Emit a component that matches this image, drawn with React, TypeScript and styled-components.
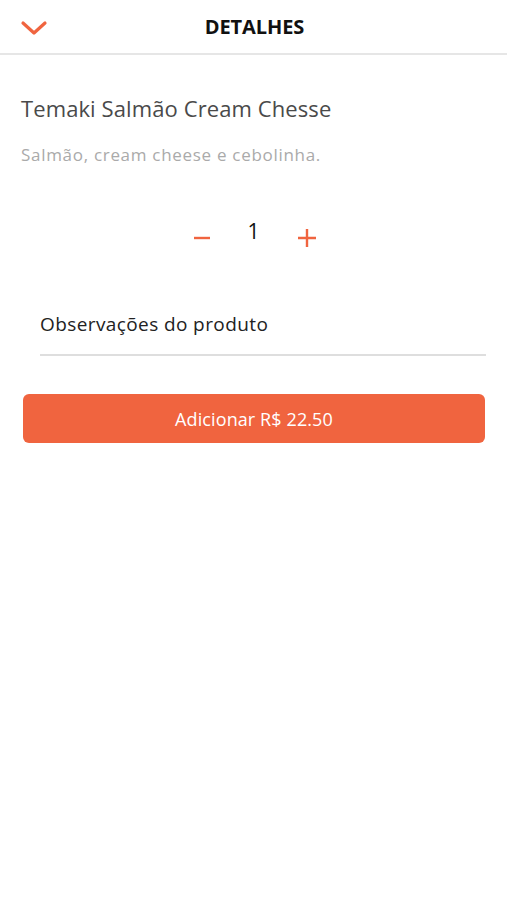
import React, {useState} from "react";
import styled, {createGlobalStyle} from "styled-components";

const ORANGE = '#f0643f';

const GlobalStyle = createGlobalStyle`
  body {
    margin: 0;
    background: #fff;
    font-family: "Open Sans", "Noto Sans", sans-serif;
  }
`;

const Page = styled.div`
  width: 507px;
  min-height: 900px;
  background: #fff;
`;

const Header = styled.header`
  position: relative;
  height: 53px;
  display: flex;
  align-items: center;
  justify-content: center;
  border-bottom: 2px solid #e6e6e6;
`;

const BackButton = styled.button`
  position: absolute;
  left: 20px;
  top: 18px;
  padding: 0;
  border: 0;
  background: none;
  display: flex;
`;

const Title = styled.h1`
  margin: 0 0 0 2px;
  font-size: 20px;
  font-weight: 700;
  color: #111;
  letter-spacing: -0.1px;
`;

const Content = styled.main`
  padding: 38px 21px 0 23px;
  display: flex;
  flex-direction: column;
`;

const ProductName = styled.h2`
  margin: 0 0 0 -2px;
  font-size: 22px;
  font-weight: 400;
  color: #4a4a4a;
  line-height: 30px;
  letter-spacing: 0.1px;
`;

const Description = styled.p`
  margin: 21px 0 0 -2px;
  font-size: 17px;
  color: #aaa;
  line-height: 22px;
  letter-spacing: 0.7px;
`;

const Stepper = styled.div`
  margin-top: 48px;
  display: flex;
  align-items: center;
  justify-content: center;
  gap: 36px;
`;

const StepButton = styled.button`
  padding: 0;
  border: 0;
  background: none;
  display: flex;
  margin-top: 14px;
`;

const Quantity = styled.span`
  font-size: 21px;
  color: #111;
  width: 14px;
  text-align: center;
`;

const NotesField = styled.div`
  margin: 63px 0 0 17px;
  padding-bottom: 17px;
  border-bottom: 2px solid #dedede;
`;

const NotesInput = styled.input`
  width: 100%;
  border: 0;
  outline: none;
  padding: 0;
  font-family: inherit;
  font-size: 19px;
  letter-spacing: 0.4px;
  color: #222;
  &::placeholder {
    color: #222;
  }
`;

const AddButton = styled.button`
  margin-top: 38px;
  height: 49px;
  width: 462px;
  border: 0;
  border-radius: 6px;
  background: ${ORANGE};
  color: #fff;
  font-family: inherit;
  font-size: 18px;
  letter-spacing: 0.1px;
`;

export default function App() {
  const [qty, setQty] = useState(1);
  const price = 22.5;

  return (
    <Page>
      <GlobalStyle/>
      <Header>
        <BackButton aria-label="voltar">
          <svg width="28" height="18" viewBox="0 0 28 18">
            <path d="M3 5 L14 15 L25 5" fill="none" stroke={ORANGE} strokeWidth="3.2" strokeLinecap="round" strokeLinejoin="round"/>
          </svg>
        </BackButton>
        <Title>DETALHES</Title>
      </Header>
      <Content>
        <ProductName>Temaki Salmão Cream Chesse</ProductName>
        <Description>Salmão, cream cheese e cebolinha.</Description>
        <Stepper>
          <StepButton aria-label="menos" onClick={() => setQty(Math.max(1, qty - 1))}>
            <svg width="18" height="4" viewBox="0 0 18 4">
              <path d="M1 2 H17" stroke={ORANGE} strokeWidth="2.4"/>
            </svg>
          </StepButton>
          <Quantity>{qty}</Quantity>
          <StepButton aria-label="mais" onClick={() => setQty(qty + 1)}>
            <svg width="20" height="20" viewBox="0 0 20 20">
              <path d="M1 10 H19 M10 1 V19" stroke={ORANGE} strokeWidth="2.4"/>
            </svg>
          </StepButton>
        </Stepper>
        <NotesField>
          <NotesInput placeholder="Observações do produto"/>
        </NotesField>
        <AddButton>Adicionar R$ {(price * qty).toFixed(2)}</AddButton>
      </Content>
    </Page>
  );
}
